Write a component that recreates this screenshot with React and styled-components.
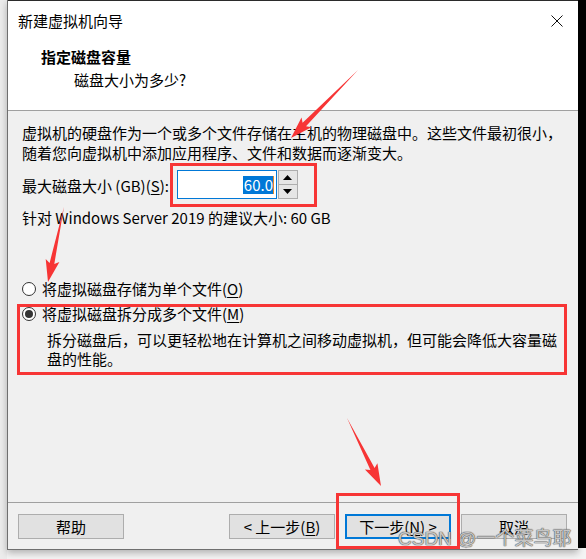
import React from "react";
import styled, { createGlobalStyle } from "styled-components";

// Win10 wizard page: "指定磁盘容量" + red screenshot annotations
const GlobalStyle = createGlobalStyle`
  html, body {
    margin: 0;
    padding: 0;
    background: #f4f4f4;
  }
  * {
    box-sizing: border-box;
  }
`;

const FONT = `"Noto Sans CJK SC", "Noto Sans", sans-serif`;

const Screen = styled.div`
  position: relative;
  width: 586px;
  height: 559px;
  display: flex;
  align-items: flex-start;
  overflow: hidden;
  background: #f4f4f4;
  font-family: ${FONT};
  font-size: 15px;
  color: #000;
`;

const Gutter = styled.div`
  width: 7px;
  height: 100%;
  background: #ececec;
`;

const Window = styled.div`
  width: 571px;
  height: 550px;
  display: flex;
  flex-direction: column;
  background: #f0f0f0;
  border-left: 1px solid #6f6f6f;
  border-bottom: 1px solid #6f6f6f;
  box-shadow: 0 3px 7px rgba(0, 0, 0, 0.28);
`;

const BlackEdge = styled.div`
  width: 8px;
  height: 548px;
  background: #000;
`;

const Header = styled.div`
  height: 111px;
  background: #fff;
  border-bottom: 1px solid #a0a0a0;
  border-top: 1px solid #2b2b2b;
`;

const TitleBar = styled.div`
  height: 39px;
  display: flex;
  align-items: center;
  justify-content: space-between;
  padding-left: 10px;
  line-height: 20px;
`;

const CloseButton = styled.div`
  width: 42px;
  height: 39px;
  display: flex;
  align-items: center;
  justify-content: center;
`;

const HeadTitle = styled.div`
  margin-top: 7px;
  padding-left: 33px;
  font-weight: 700;
  line-height: 20px;
`;

const HeadSub = styled.div`
  margin-top: 3px;
  padding-left: 66px;
  line-height: 20px;
`;

const Body = styled.div`
  flex: 1;
  padding-left: 14px;
  display: flex;
  flex-direction: column;
`;

const Para = styled.p`
  margin: ${(p) => p.$top}px 0 0 ${(p) => p.$indent || 0}px;
  line-height: ${(p) => p.$lh || 20}px;
  white-space: nowrap;
`;

const SizeRow = styled.div`
  margin-top: 7px;
  display: flex;
  align-items: center;
  height: 29px;
`;

const Label = styled.span`
  line-height: 20px;
  margin-right: 8px;
  padding-top: 2px;
`;

const U = styled.span`
  text-decoration: underline;
  text-underline-offset: 2px;
`;

const NumberField = styled.div`
  width: 100px;
  height: 29px;
  background: #fff;
  border: 1px solid #0078d7;
  display: flex;
  align-items: center;
  justify-content: flex-end;
  padding-right: 2px;
`;

const Selected = styled.span`
  background: #0078d7;
  color: #fff;
  line-height: 18px;
  height: 18px;
  padding: 0 0 0 1px;
  border-right: 1px solid #e08a2a;
`;

const Spinner = styled.div`
  margin-left: 1px;
  display: flex;
  flex-direction: column;
  height: 29px;
`;

const SpinButton = styled.div`
  width: 20px;
  height: ${(p) => p.$h}px;
  background: #e5e5e5;
  border: 1px solid #adadad;
  border-top-width: ${(p) => (p.$down ? 0 : 1)}px;
  display: flex;
  align-items: center;
  justify-content: center;
`;

const RadioRow = styled.label`
  margin-top: ${(p) => p.$top}px;
  display: flex;
  align-items: center;
  height: 20px;
  line-height: 20px;
`;

const RadioCircle = styled.span`
  width: 14px;
  height: 14px;
  border-radius: 50%;
  border: 1px solid #333;
  background: #fff;
  margin-right: 6px;
  display: flex;
  align-items: center;
  justify-content: center;

  &::after {
    content: "";
    width: 8px;
    height: 8px;
    border-radius: 50%;
    background: ${(p) => (p.$checked ? "#333" : "transparent")};
  }
`;

const Footer = styled.div`
  height: 47px;
  border-top: 1px solid #a0a0a0;
  display: flex;
  padding: 11px 11px 0 10px;
  gap: 10px;
`;

const Button = styled.div`
  width: 106px;
  height: 25px;
  display: flex;
  align-items: center;
  justify-content: center;
  background: #e1e1e1;
  border: ${(p) => (p.$primary ? "2px solid #0078d7" : "1px solid #adadad")};
  line-height: 20px;
  margin-left: ${(p) => (p.$push ? "auto" : "0")};
`;

const Watermark = styled.div`
  position: absolute;
  left: 398px;
  top: 529px;
  font-family: "Liberation Sans", "Noto Sans CJK SC", sans-serif;
  font-size: 19px;
  line-height: 20px;
  color: rgba(232, 232, 232, 0.8);
  text-shadow: 0 0 1px rgba(70, 70, 70, 0.95), 0 0 1px rgba(70, 70, 70, 0.9),
    0 0 1px rgba(70, 70, 70, 0.6);
  white-space: nowrap;
`;

const Annotations = styled.svg`
  position: absolute;
  left: 0;
  top: 0;
  pointer-events: none;
`;

const RED = "#f73535";

// tapered annotation arrow from tail to tip
function arrowPoints([tx, ty], [px, py]) {
  const len = Math.hypot(px - tx, py - ty);
  const dx = (px - tx) / len;
  const dy = (py - ty) / len;
  const nx = -dy;
  const ny = dx;
  const head = 22;
  const at = (d, w) => [px - dx * d + nx * w, py - dy * d + ny * w];
  const pts = [
    [tx, ty],
    at(head - 3, 2.4),
    at(head, 7),
    [px, py],
    at(head, -7),
    at(head - 3, -2.4),
  ];
  return pts.map((p) => p.map((v) => v.toFixed(1)).join(",")).join(" ");
}

const boxes = [
  { x: 171.5, y: 164.5, w: 144, h: 41 },
  { x: 18.5, y: 305.5, w: 547, h: 68 },
  { x: 337.5, y: 494.5, w: 121, h: 53 },
];

const arrows = [
  [[358, 70], [291, 138]],
  [[64, 207], [48, 282]],
  [[347, 418], [381, 486]],
];

function UpTri({ down }) {
  return (
    <svg width="9" height="5" viewBox="0 0 9 5">
      <polygon points={down ? "0,0 9,0 4.5,5" : "4.5,0 9,5 0,5"} fill="#000" />
    </svg>
  );
}

export default function App() {
  return (
    <Screen>
      <GlobalStyle />
      <Gutter />
      <Window>
        <Header>
          <TitleBar>
            <span>新建虚拟机向导</span>
            <CloseButton>
              <svg width="12" height="12" viewBox="0 0 12 12">
                <path d="M0.5 0.5 L11.5 11.5 M11.5 0.5 L0.5 11.5" stroke="#111" strokeWidth="1" />
              </svg>
            </CloseButton>
          </TitleBar>
          <HeadTitle>指定磁盘容量</HeadTitle>
          <HeadSub>磁盘大小为多少?</HeadSub>
        </Header>

        <Body>
          <Para $top={12}>
            虚拟机的硬盘作为一个或多个文件存储在主机的物理磁盘中。这些文件最初很小，
            <br />
            随着您向虚拟机中添加应用程序、文件和数据而逐渐变大。
          </Para>

          <SizeRow>
            <Label>
              最大磁盘大小 (GB)(<U>S</U>):
            </Label>
            <NumberField>
              <Selected>60.0</Selected>
            </NumberField>
            <Spinner>
              <SpinButton $h={15}>
                <UpTri />
              </SpinButton>
              <SpinButton $h={14} $down>
                <UpTri down />
              </SpinButton>
            </Spinner>
          </SizeRow>

          <Para $top={9}>针对 Windows Server 2019 的建议大小: 60 GB</Para>

          <RadioRow $top={51}>
            <RadioCircle />
            将虚拟磁盘存储为单个文件(<U>O</U>)
          </RadioRow>
          <RadioRow $top={5}>
            <RadioCircle $checked />
            将虚拟磁盘拆分成多个文件(<U>M</U>)
          </RadioRow>
          <Para $top={6} $indent={25} $lh={19}>
            拆分磁盘后，可以更轻松地在计算机之间移动虚拟机，但可能会降低大容量磁
            <br />
            盘的性能。
          </Para>
        </Body>

        <Footer>
          <Button>帮助</Button>
          <Button $push>
            &lt; 上一步(<U>B</U>)
          </Button>
          <Button $primary>
            下一步(<U>N</U>) &gt;
          </Button>
          <Button>取消</Button>
        </Footer>
      </Window>
      <BlackEdge />

      <Watermark>CSDN @一个菜鸟耶</Watermark>

      <Annotations width="586" height="559" viewBox="0 0 586 559">
        {boxes.map((b, i) => (
          <rect key={i} x={b.x} y={b.y} width={b.w} height={b.h} fill="none" stroke={RED} strokeWidth="3" />
        ))}
        {arrows.map(([tail, tip], i) => (
          <polygon key={i} points={arrowPoints(tail, tip)} fill={RED} />
        ))}
      </Annotations>
    </Screen>
  );
}
